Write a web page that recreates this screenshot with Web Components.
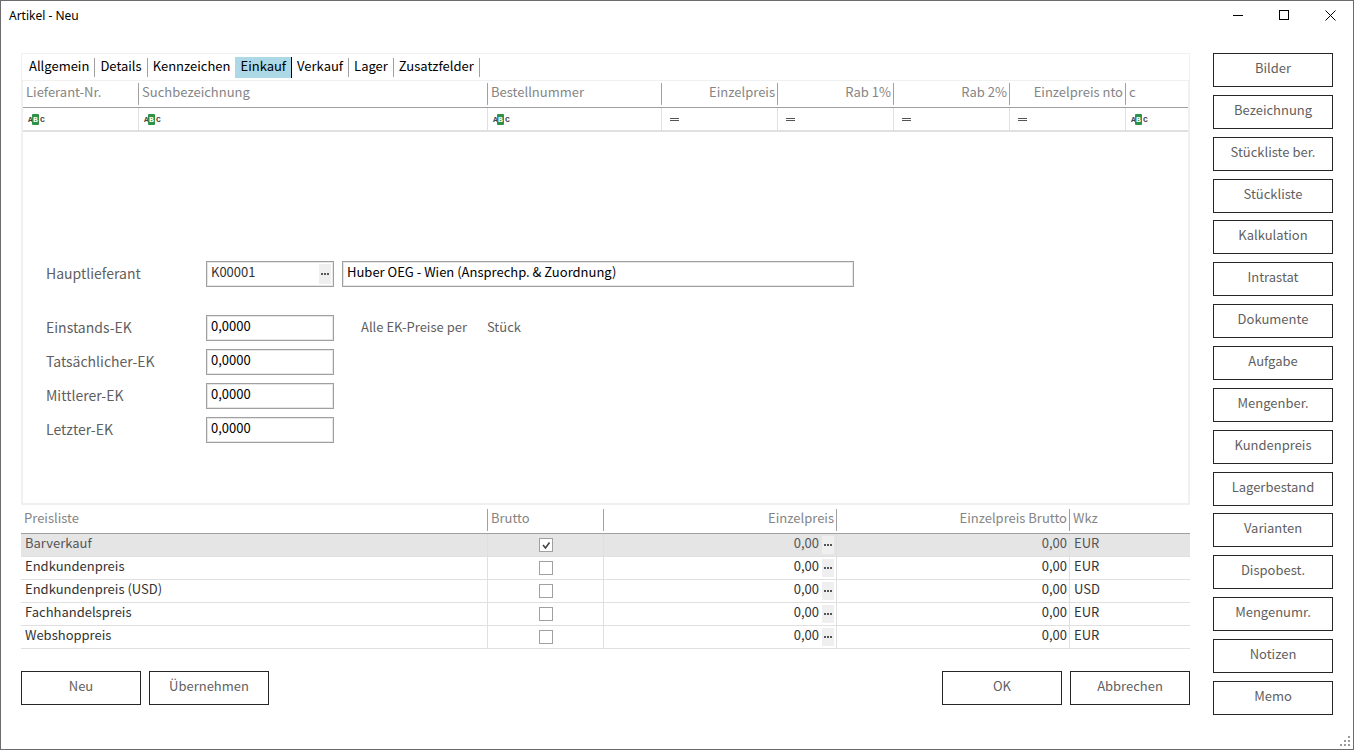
<!DOCTYPE html>
<html lang="de">
<head>
<meta charset="utf-8">
<title>Artikel - Neu</title>
<style>
  body {
    margin: 0;
    padding: 0 2px 1px 0;
    box-sizing: border-box;
    min-height: 100vh;
    display: flex;
    background: #fff;
    color: #5f5f5f;
    font: 13px/20px "Noto Sans CJK JP", "Noto Sans", sans-serif;
    --line: #e0e0e0;
    --frame: #f0f0f0;
    --rule: #a0a0a0;
  }
</style>
</head>
<body>
<app-window></app-window>

<script>
const define = (name, html, setup) => {
  const template = document.createElement('template');
  template.innerHTML = html;
  customElements.define(name, class extends HTMLElement {
    connectedCallback() {
      if (this.shadowRoot) return;
      const root = this.attachShadow({ mode: 'open' });
      root.append(template.content.cloneNode(true));
      if (setup) setup(root, this);
    }
  });
};

/* Outlined push button */
define('push-button', `
<style>
  :host { display: block; width: 120px; }
  button {
    display: block; box-sizing: border-box; width: 100%; height: 34px;
    margin: 0; padding: 0 0 4px; border: 1px solid #262626; background: #fff;
    color: #5f5f5f; font: inherit; text-align: center;
  }
</style>
<button type="button"><slot></slot></button>`);

/* Small "..." lookup button */
define('lookup-button', `
<style>
  :host { display: block; width: 12px; height: 18px; }
  button {
    display: flex; align-items: center; justify-content: center; width: 100%; height: 100%;
    margin: 0; padding: 0; border: 0; background: #efefef;
  }
</style>
<button type="button" aria-label="Auswahl">
  <svg width="8" height="2" viewBox="0 0 8 2" fill="#555"><rect width="2" height="2"/><rect x="3" width="2" height="2"/><rect x="6" width="2" height="2"/></svg>
</button>`);

/* Filter operator icons */
define('filter-text-icon', `
<style>
  :host { display: flex; align-items: center; height: 11px; font: bold 8px/11px "Liberation Mono", monospace; color: #444; }
  b { box-sizing: border-box; width: 7px; height: 11px; margin-right: 1px; background: #2e9148; color: #fff; text-align: center; border-radius: 1px; }
  span { width: 4px; }
</style>
<span>A</span><b>B</b><span>C</span>`);

define('filter-equal-icon', `
<style>:host { display: block; } svg { display: block; }</style>
<svg width="9" height="3" viewBox="0 0 9 3" fill="#555"><rect width="9" height="1"/><rect y="2" width="9" height="1"/></svg>`);

define('title-bar', `
<style>
  :host { display: flex; align-items: center; justify-content: space-between; height: 28px; padding-left: 8px; color: #000; }
  h1 { margin: 0; padding-top: 2px; font: 12px/16px "Noto Sans", sans-serif; }
  nav { display: flex; }
  button { width: 46px; height: 28px; margin: 0; padding: 0; border: 0; background: none; display: flex; align-items: center; justify-content: center; }
  svg { fill: none; stroke: #000; }
</style>
<h1><slot></slot></h1>
<nav>
  <button type="button" aria-label="Minimieren"><svg width="10" height="11"><path d="M0 5.500h10"/></svg></button>
  <button type="button" aria-label="Maximieren"><svg width="10" height="10"><rect x=".5" y=".5" width="9" height="9"/></svg></button>
  <button type="button" aria-label="Schließen"><svg width="11" height="11"><path d="M.5.5l10 10M10.500.5l-10 10"/></svg></button>
</nav>`);

define('tab-strip', `
<style>
  :host { display: flex; height: 21px; padding: 3px 2px 2px; color: #000; }
  button {
    margin: 0; padding: 0 5px 4px; border: 0; background: none; color: inherit; font: inherit; line-height: 17px;
    border-right: 1px solid transparent; background: linear-gradient(var(--rule), var(--rule)) border-box right 1px / 1px 19px no-repeat;
  }
  button[aria-selected=true] { background: #add8e6; border-color: #000; }
  button.plain { border: 0; background: none; }
</style>
<button type="button" role="tab">Allgemein</button>
<button type="button" role="tab">Details</button>
<button type="button" role="tab" class="plain">Kennzeichen</button>
<button type="button" role="tab" aria-selected="true">Einkauf</button>
<button type="button" role="tab">Verkauf</button>
<button type="button" role="tab">Lager</button>
<button type="button" role="tab">Zusatzfelder</button>`);

const tableStyle = `
  :host { display: block; }
  table { width: 100%; table-layout: fixed; border-collapse: separate; border-spacing: 0; }
  th, td { padding: 0; font-weight: normal; text-align: left; white-space: nowrap; box-sizing: border-box; }
  th { height: 27px; color: #858585; border-bottom: 1px solid var(--rule); vertical-align: top; }
  th span { display: block; height: 22px; line-height: 17px; margin-top: 2px; padding: 0 2px 0 3px; border-right: 1px solid var(--rule); box-sizing: border-box; }
  th:last-child span { border: 0; }
  .num { text-align: right; }
`;

define('supplier-grid', `
<style>
  ${tableStyle}
  td { height: 24px; border-bottom: 2px solid var(--line); border-right: 1px solid var(--line); padding-left: 5px; }
  td:last-child { border-right: 0; }
  td.op { padding-left: 8px; }
</style>
<table>
  <colgroup><col width="116"><col width="349"><col width="174"><col width="116"><col width="116"><col width="116"><col width="116"><col></colgroup>
  <thead><tr>
    <th><span>Lieferant-Nr.</span></th><th><span>Suchbezeichnung</span></th><th><span>Bestellnummer</span></th>
    <th class="num"><span>Einzelpreis</span></th><th class="num"><span>Rab 1%</span></th><th class="num"><span>Rab 2%</span></th>
    <th class="num"><span>Einzelpreis nto</span></th><th><span>c</span></th>
  </tr></thead>
  <tbody><tr>
    <td><filter-text-icon></filter-text-icon></td><td><filter-text-icon></filter-text-icon></td><td><filter-text-icon></filter-text-icon></td>
    <td class="op"><filter-equal-icon></filter-equal-icon></td><td class="op"><filter-equal-icon></filter-equal-icon></td>
    <td class="op"><filter-equal-icon></filter-equal-icon></td><td class="op"><filter-equal-icon></filter-equal-icon></td>
    <td><filter-text-icon></filter-text-icon></td>
  </tr></tbody>
</table>`);

/* Label, text box, and an optional lookup button in the slot */
define('text-field', `
<style>
  :host { display: flex; align-items: center; height: 26px; }
  label { width: 160px; padding-bottom: 2px; font-size: 14px; }
  .box { display: flex; align-items: center; box-sizing: border-box; width: 128px; height: 26px; border: 1px solid var(--rule); padding: 1px; box-shadow: inset 0 0 0 1px #e6e6e6; }
  input { flex: 1; min-width: 0; box-sizing: border-box; height: 22px; margin: 0; padding: 0 3px 6px; border: 0; outline: 0; background: none; color: #000; font: inherit; }
  :host([wide]) .box { width: 512px; }
  :host([wide]) label { display: none; }
  :host([lookup]) input { color: #333; }
  ::slotted(lookup-button) { margin-right: 1px; height: 20px; }
</style>
<label for="value"></label>
<div class="box"><input id="value" type="text"><slot></slot></div>`, (root, host) => {
  root.querySelector('label').textContent = host.getAttribute('label');
  const input = root.querySelector('input');
  input.value = host.getAttribute('value');
  input.setAttribute('aria-label', host.getAttribute('label'));
});

define('purchase-form', `
<style>
  :host { display: block; padding: 129px 23px 60px; }
  .row { display: flex; gap: 8px; }
  .prices { display: flex; gap: 27px; margin-top: 28px; }
  .stack { display: grid; gap: 8px; }
  p { margin: 0; padding-top: 1px; display: flex; gap: 20px; line-height: 22px; }
</style>
<div class="row">
  <text-field lookup label="Hauptlieferant" value="K00001"><lookup-button></lookup-button></text-field>
  <text-field wide label="Lieferantenname" value="Huber OEG - Wien (Ansprechp. &amp; Zuordnung)"></text-field>
</div>
<div class="prices">
  <div class="stack">
    <text-field label="Einstands-EK" value="0,0000"></text-field>
    <text-field label="Tatsächlicher-EK" value="0,0000"></text-field>
    <text-field label="Mittlerer-EK" value="0,0000"></text-field>
    <text-field label="Letzter-EK" value="0,0000"></text-field>
  </div>
  <p><span>Alle EK-Preise per</span><span>Stück</span></p>
</div>`);

define('price-list', `
<style>
  ${tableStyle}
  :host { color: #333; }
  td { height: 23px; border-bottom: 1px solid var(--line); border-right: 1px solid var(--line); padding: 0 2px 4px 4px; line-height: 18px; }
  td:last-child { border-right: 0; }
  .on td { background: #e5e5e5; color: #555; }
  td.check { padding: 0; }
  input { appearance: none; display: block; box-sizing: border-box; width: 14px; height: 14px; margin: 0 auto; border: 1px solid var(--rule); background: #fff; }
  input:checked { background: #fff url("data:image/svg+xml,%3Csvg xmlns='http://www.w3.org/2000/svg' viewBox='0 0 12 12'%3E%3Cpath d='M3 6l2.500 3L9.500 3.500' fill='none' stroke='%23444' stroke-width='1.600'/%3E%3C/svg%3E"); }
  td.edit { padding: 0 2px 0 0; }
  .cell { display: flex; justify-content: flex-end; align-items: flex-start; gap: 3px; height: 22px; }
  .cell lookup-button { margin-top: 2px; }
</style>
<table>
  <colgroup><col width="467"><col width="116"><col width="233"><col width="233"><col></colgroup>
  <thead><tr>
    <th><span>Preisliste</span></th><th><span>Brutto</span></th><th class="num"><span>Einzelpreis</span></th>
    <th class="num"><span>Einzelpreis Brutto</span></th><th><span>Wkz</span></th>
  </tr></thead>
  <tbody></tbody>
</table>`, root => {
  const rows = [['Barverkauf', 'EUR', true], ['Endkundenpreis', 'EUR'], ['Endkundenpreis (USD)', 'USD'], ['Fachhandelspreis', 'EUR'], ['Webshoppreis', 'EUR']];
  root.querySelector('tbody').innerHTML = rows.map(([name, currency, on]) => `
    <tr class="${on ? 'on' : ''}"><td>${name}</td>
    <td class="check"><input type="checkbox" aria-label="Brutto ${name}" ${on ? 'checked' : ''}></td>
    <td class="edit"><div class="cell"><span>0,00</span><lookup-button></lookup-button></div></td>
    <td class="num">0,00</td><td>${currency}</td></tr>`).join('');
});

define('side-menu', `
<style>:host { display: flex; flex-direction: column; justify-content: space-between; }</style>
<slot></slot>`);

define('size-grip', `
<style>:host { position: absolute; right: 3px; bottom: 3px; } svg { display: block; }</style>
<svg width="10" height="10" fill="#9a9a9a"><rect x="8" width="2" height="2"/><rect x="4" y="4" width="2" height="2"/><rect x="8" y="4" width="2" height="2"/><rect y="8" width="2" height="2"/><rect x="4" y="8" width="2" height="2"/><rect x="8" y="8" width="2" height="2"/></svg>`);

define('app-window', `
<style>
  :host { flex: 1; display: flex; flex-direction: column; position: relative; box-sizing: border-box; border: 1px solid #6c6c70; background: #fff; }
  .body { flex: 1; display: flex; gap: 23px; padding: 24px 20px 34px; }
  main { flex: 1; min-width: 0; }
  .panel { border: 1px solid var(--frame); border-bottom: 0; }
  .page { border: 1px solid var(--frame); border-bottom-width: 2px; margin: 0 0 2px; }
  .actions { display: flex; gap: 8px; margin-top: 22px; }
  .actions :nth-child(3) { margin-left: auto; }
</style>
<title-bar>Artikel - Neu</title-bar>
<div class="body">
  <main>
    <div class="panel">
      <tab-strip></tab-strip>
      <div class="page">
        <supplier-grid></supplier-grid>
        <purchase-form></purchase-form>
      </div>
    </div>
    <price-list></price-list>
    <div class="actions">
      <push-button>Neu</push-button><push-button>Übernehmen</push-button>
      <push-button>OK</push-button><push-button>Abbrechen</push-button>
    </div>
  </main>
  <side-menu>
    <push-button>Bilder</push-button><push-button>Bezeichnung</push-button><push-button>Stückliste ber.</push-button>
    <push-button>Stückliste</push-button><push-button>Kalkulation</push-button><push-button>Intrastat</push-button>
    <push-button>Dokumente</push-button><push-button>Aufgabe</push-button><push-button>Mengenber.</push-button>
    <push-button>Kundenpreis</push-button><push-button>Lagerbestand</push-button><push-button>Varianten</push-button>
    <push-button>Dispobest.</push-button><push-button>Mengenumr.</push-button><push-button>Notizen</push-button>
    <push-button>Memo</push-button>
  </side-menu>
</div>
<size-grip></size-grip>`);
</script>
</body>
</html>
